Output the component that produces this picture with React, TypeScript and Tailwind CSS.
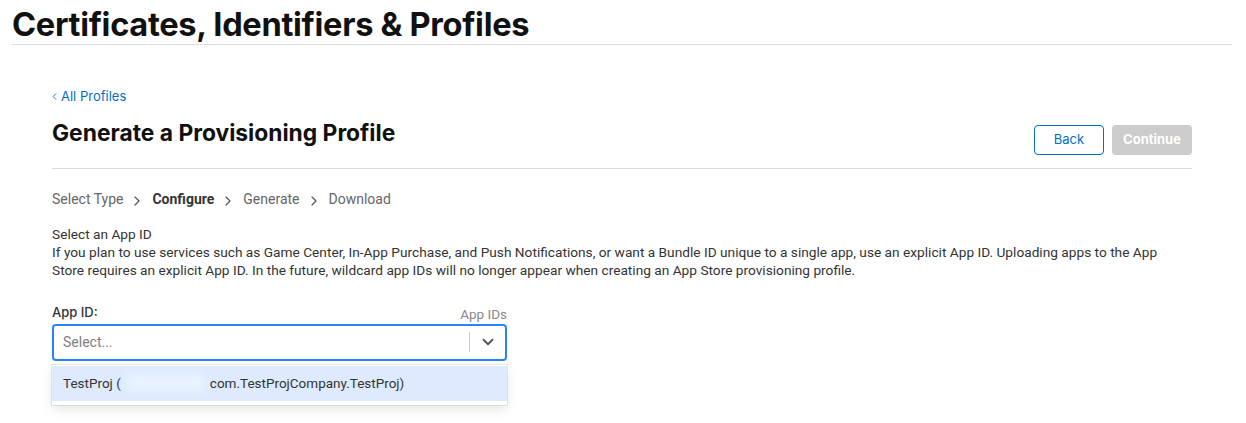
import { ChevronDown, ChevronLeft, ChevronRight } from 'lucide-react'

const steps = [
  { label: 'Select Type', active: false },
  { label: 'Configure', active: true },
  { label: 'Generate', active: false },
  { label: 'Download', active: false },
]

const inter = "font-['Inter',sans-serif]"
const roboto = "font-['Roboto',sans-serif]"

const Breadcrumbs = () => (
  <div className={`flex items-center text-[14px] leading-[20px] text-[#666] ${roboto}`}>
    {steps.map((step, i) => (
      <div key={step.label} className="flex items-center">
        {i > 0 ? (
          <ChevronRight className="ml-[6px] mr-[7px] mt-[4px] h-[16px] w-[16px] text-[#555]" strokeWidth={1.8} />
        ) : null}
        <span className={step.active ? 'font-bold text-[#333]' : ''}>{step.label}</span>
      </div>
    ))}
  </div>
)

const AppIdSelect = () => (
  <div className="w-[455px]">
    <div className="flex items-end justify-between">
      <span className={`text-[13px] font-medium leading-[18px] text-[#333] ${inter}`}>App ID:</span>
      <span className={`mb-[-2px] text-[13.5px] leading-[18px] text-[#888] ${roboto}`}>App IDs</span>
    </div>
    <div className="relative mt-[3px]">
      <div className="flex h-[37px] items-center rounded-[4px] border-2 border-[#2684ff] bg-white">
        <span className={`flex-1 pl-[9px] text-[14px] text-[#808080] ${roboto}`}>Select...</span>
        <span className="h-[20px] w-px bg-[#ccc]" />
        <span className="flex w-[35px] items-center justify-center">
          <ChevronDown className="h-[18px] w-[18px] text-[#555]" strokeWidth={2.5} />
        </span>
      </div>
      <div className="absolute left-0 right-0 top-[41px] z-10 bg-white pb-[4px] pt-[1px] shadow-[0_0_0_1px_rgba(0,0,0,0.08),0_4px_11px_rgba(0,0,0,0.1)]">
        <div className={`flex h-[35px] items-center bg-[#deebff] pl-[11px] text-[13.5px] text-[#333] ${roboto}`}>
          <span>TestProj (</span>
          <span className="mx-[4px] inline-block h-[16px] w-[81px] shrink-0 rounded-full bg-white/40 blur-[4px]" />
          <span>com.TestProjCompany.TestProj)</span>
        </div>
      </div>
    </div>
  </div>
)

const App = () => {
  return (
    <div className="min-h-[423px] bg-white text-[#111]">
      <div className="px-[12px] pt-[4px]">
        <h1 className={`text-[32.6px] font-bold leading-[40px] tracking-[-0.3px] ${inter}`}>
          Certificates, Identifiers &amp; Profiles
        </h1>
        <div className="h-px w-[1220px] bg-[#e0e0e0]" />
      </div>

      <div className="mx-[52px] w-[1140px] pt-[42px]">
        <a className={`flex items-center text-[13px] text-[#0070c9] ${inter}`} href="#">
          <ChevronLeft className="ml-[-3px] mr-[1px] h-[11px] w-[11px]" strokeWidth={2} />
          All Profiles
        </a>

        <div className="mt-[12px] flex items-start justify-between">
          <h2 className={`text-[22.8px] font-bold leading-[28px] text-[#111] ${inter}`}>Generate a Provisioning Profile</h2>
          <div className="mt-[6px] flex gap-[8px]">
            <button
              className={`h-[30px] w-[70px] rounded-[4px] border border-[#0070c9] bg-white text-[13px] text-[#0070c9] ${inter}`}
            >
              Back
            </button>
            <button className={`h-[30px] w-[80px] rounded-[4px] bg-[#cccccc] text-[13px] font-bold text-white ${inter}`}>
              Continue
            </button>
          </div>
        </div>

        <div className="mt-[13px] h-px w-full bg-[#dcdcdc]" />

        <div className="mt-[20px]">
          <Breadcrumbs />
        </div>

        <div className={`mt-[16px] text-[13.7px] leading-[18px] text-[#333] ${roboto}`}>
          <p>Select an App ID</p>
          <p>
            If you plan to use services such as Game Center, In-App Purchase, and Push Notifications, or want a Bundle ID
            unique to a single app, use an explicit App ID. Uploading apps to the App Store requires an explicit App ID. In
            the future, wildcard app IDs will no longer appear when creating an App Store provisioning profile.
          </p>
        </div>

        <div className="mt-[24px]">
          <AppIdSelect />
        </div>
      </div>
    </div>
  )
}

export default App
